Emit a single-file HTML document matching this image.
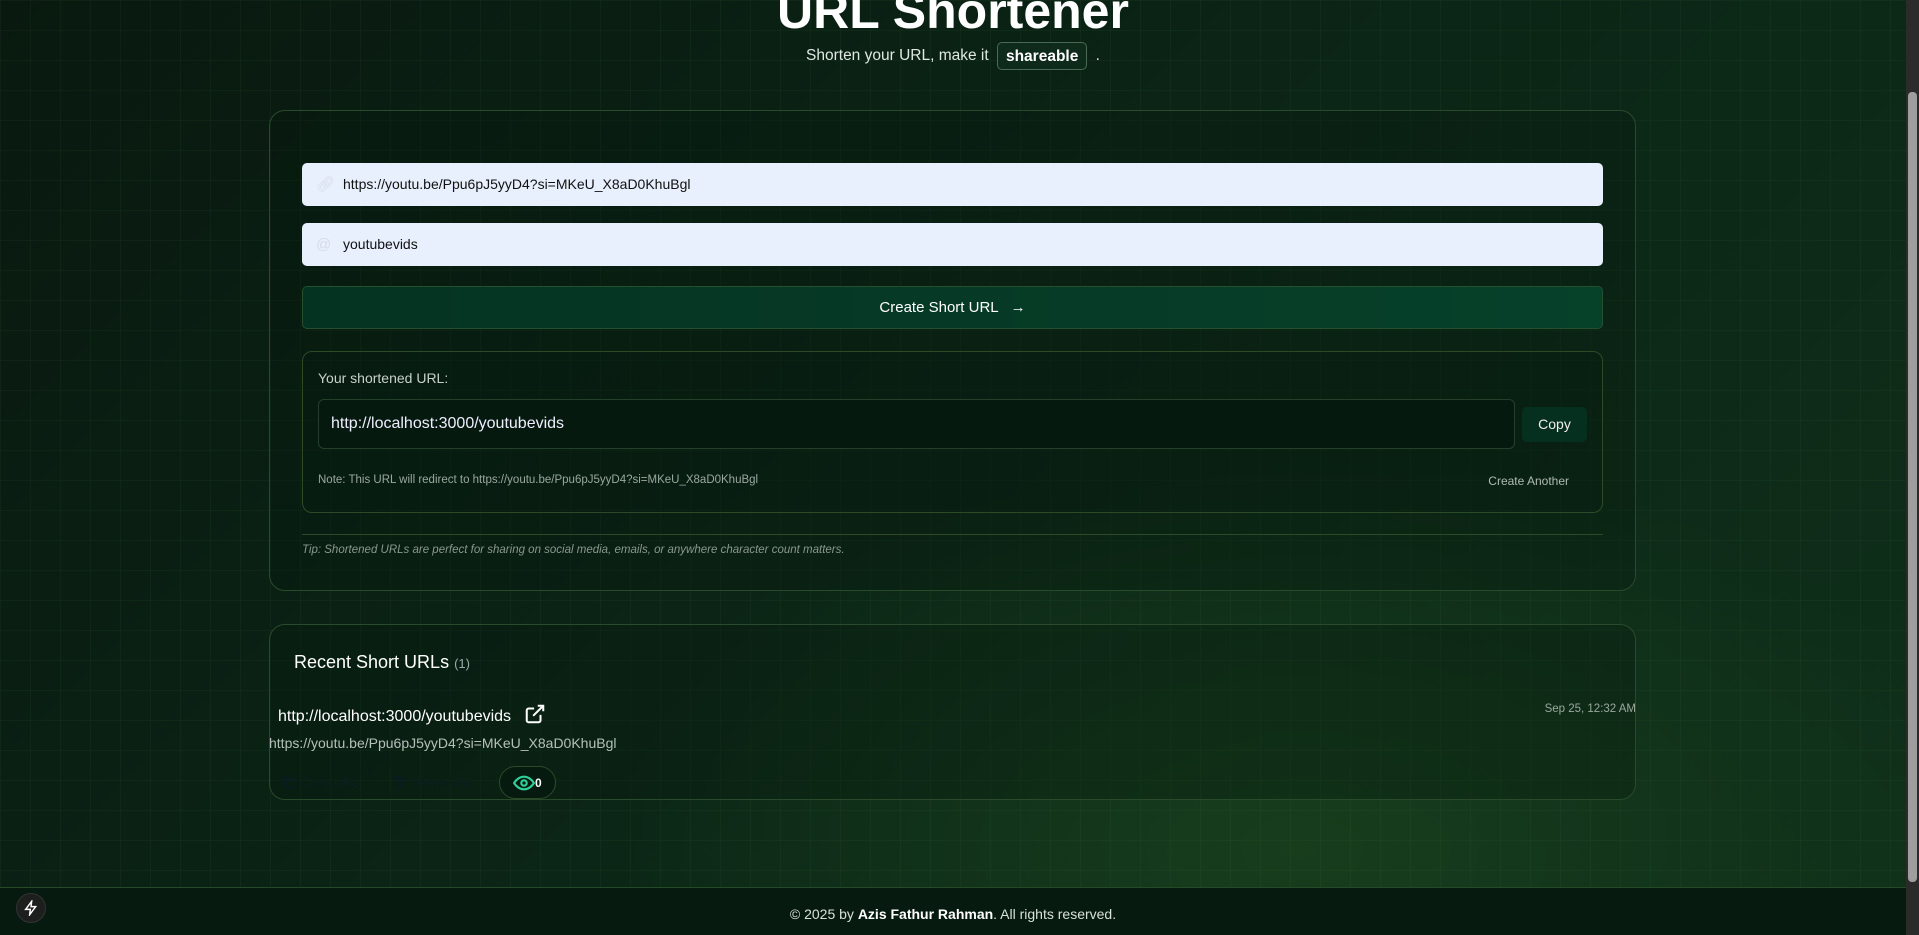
<!DOCTYPE html>
<html><head><meta charset="utf-8"><style>
*{box-sizing:border-box;margin:0;padding:0}
html,body{width:1919px;height:935px;overflow:hidden}
body{font-family:"Liberation Sans",sans-serif;color:#e6eee8;position:relative;
background:radial-gradient(ellipse 700px 400px at 1300px 850px,#173d1d 0%,rgba(22,59,28,0) 100%),linear-gradient(135deg,#09190f 0%,#0b2516 50%,#0f301a 100%);}
.grid{position:absolute;left:0;top:0;width:1906px;height:887px;
background-image:linear-gradient(rgba(80,140,80,.07) 1px,transparent 1px),linear-gradient(90deg,rgba(80,140,80,.07) 1px,transparent 1px);background-size:30px 30px}
.abs{position:absolute}
h1{position:absolute;left:0;width:1906px;top:-18px;text-align:center;font-size:50px;font-weight:bold;color:#fff}
.sub{position:absolute;left:0;width:1906px;top:42px;text-align:center;font-size:15.5px;color:#e0e8e2}
.badge{display:inline-block;border:1px solid #4a6a55;border-radius:5px;padding:5px 8px 3px;font-weight:bold;background:#0e2a1a;color:#fff;vertical-align:middle;margin:0 4px}
.card{position:absolute;left:269px;width:1367px;border:1px solid #2a4a2c;border-radius:16px;background:rgba(6,24,14,.3)}
.inp{position:absolute;left:302px;width:1301px;height:43px;background:#e8f0fe;border-radius:5px;color:#111;font-size:14px;padding-left:41px;line-height:43px}
.inp .ic{position:absolute;left:14px;top:0;color:#d6dce6;font-size:15px}
.btn{position:absolute;left:302px;top:286px;width:1301px;height:43px;border:1px solid #24502f;border-radius:5px;background:linear-gradient(90deg,#053322,#06412a);text-align:center;line-height:42px;font-size:15px;color:#fff}
.res{position:absolute;left:302px;top:351px;width:1301px;height:162px;border:1px solid #2d4a28;border-radius:10px;background:rgba(6,28,16,.3)}
</style></head><body>
<div class="grid"></div>
<h1>URL Shortener</h1>
<div class="sub">Shorten your URL, make it <span class="badge">shareable</span> .</div>

<div class="card" style="top:110px;height:481px"></div>
<div class="inp" style="top:163px"><span class="ic">🔗︎</span>https://youtu.be/Ppu6pJ5yyD4?si=MKeU_X8aD0KhuBgl</div>
<div class="inp" style="top:223px"><span class="ic">@</span>youtubevids</div>
<div class="btn">Create Short URL &nbsp;&nbsp;→</div>
<div class="res">
 <div class="abs" style="left:15px;top:18px;font-size:14px;color:#c8d2ca">Your shortened URL:</div>
 <div class="abs" style="left:15px;top:47px;width:1197px;height:50px;border:1px solid #24402a;border-radius:6px;background:#06190f;font-size:16px;line-height:48px;padding-left:12px;color:#eef">http://localhost:3000/youtubevids</div>
 <div class="abs" style="left:1219px;top:55px;width:65px;height:35px;border-radius:5px;background:#053020;text-align:center;line-height:35px;font-size:14px;color:#eee">Copy</div>
 <div class="abs" style="left:15px;top:122px;font-size:11.5px;color:#9aa89e">Note: This URL will redirect to https://youtu.be/Ppu6pJ5yyD4?si=MKeU_X8aD0KhuBgl</div>
 <div class="abs" style="right:33px;top:122px;font-size:12px;color:#b0bab3">Create Another</div>
</div>
<div class="abs" style="left:302px;top:534px;width:1301px;height:1px;background:#2d4a28"></div>
<div class="abs" style="left:302px;top:544px;font-size:11.5px;font-style:italic;color:#8a988e">Tip: Shortened URLs are perfect for sharing on social media, emails, or anywhere character count matters.</div>

<div class="card" style="top:624px;height:176px"></div>
<div class="abs" style="left:294px;top:652px;font-size:18px;color:#fff">Recent Short URLs <span style="font-size:13px;color:#9aa">(1)</span></div>
<div class="abs" style="left:278px;top:703px;font-size:16px;color:#fff">http://localhost:3000/youtubevids
<svg width="22" height="22" viewBox="0 0 24 24" fill="none" stroke="#fff" stroke-width="2.2" style="vertical-align:-4px;margin-left:8px"><path d="M18 13v6a2 2 0 0 1-2 2H5a2 2 0 0 1-2-2V8a2 2 0 0 1 2-2h6M15 3h6v6M10 14L21 3"/></svg></div>
<div class="abs" style="right:283px;top:703px;font-size:11.5px;color:#9aa89e">Sep 25, 12:32 AM</div>
<div class="abs" style="left:269px;top:735px;font-size:14px;color:#b5c0b8">https://youtu.be/Ppu6pJ5yyD4?si=MKeU_X8aD0KhuBgl</div>
<div class="abs" style="left:282px;top:774px;font-size:12.5px;color:#0a1f20">
<svg width="16" height="16" viewBox="0 0 24 24" fill="none" stroke="#0b1a24" stroke-width="2" style="vertical-align:-3px"><rect x="8" y="8" width="13" height="13" rx="2"/><path d="M4 16V5a2 2 0 0 1 2-2h11"/></svg> Copy URL
<span style="margin-left:30px"><svg width="14" height="16" viewBox="0 0 24 24" fill="none" stroke="#0b1a24" stroke-width="2" style="vertical-align:-3px"><path d="M3 6h18M8 6V4h8v2M5 6l1 15h12l1-15M10 10v8M14 10v8"/></svg> Delete URL</span></div>
<div class="abs" style="left:499px;top:766px;width:57px;height:33px;border:1px solid #2d4a28;border-radius:17px;background:#061a10;padding:7px 0 0 13px;font-size:12px;font-weight:bold;color:#fff">
<svg width="22" height="18" viewBox="0 0 24 20" fill="none" stroke="#2fd39a" stroke-width="2.4" style="vertical-align:-5px"><path d="M1 10s4-7 11-7 11 7 11 7-4 7-11 7S1 10 1 10z"/><circle cx="12" cy="10" r="3"/></svg>0</div>

<div class="abs" style="left:0;top:887px;width:1906px;height:48px;border-top:1px solid #244a28;background:#061a10"></div>
<div class="abs" style="left:0;width:1906px;top:906px;text-align:center;font-size:14px;color:#d8e0da">© 2025 by <b style="color:#fff">Azis Fathur Rahman</b>. All rights reserved.</div>
<div class="abs" style="left:16px;top:893px;width:30px;height:30px;border-radius:50%;background:#1c1f1e;border:1px solid #333;text-align:center">
<svg width="16" height="16" viewBox="0 0 24 24" fill="none" stroke="#fff" stroke-width="2.2" style="margin-top:6px"><path d="M13 2L4 14h7l-1 8 9-12h-7z"/></svg></div>

<div class="abs" style="left:1906px;top:0;width:13px;height:935px;background:#2b2b2b"></div>
<div class="abs" style="left:1908px;top:92px;width:9px;height:790px;border-radius:4px;background:#9e9e9e"></div>
</body></html>
